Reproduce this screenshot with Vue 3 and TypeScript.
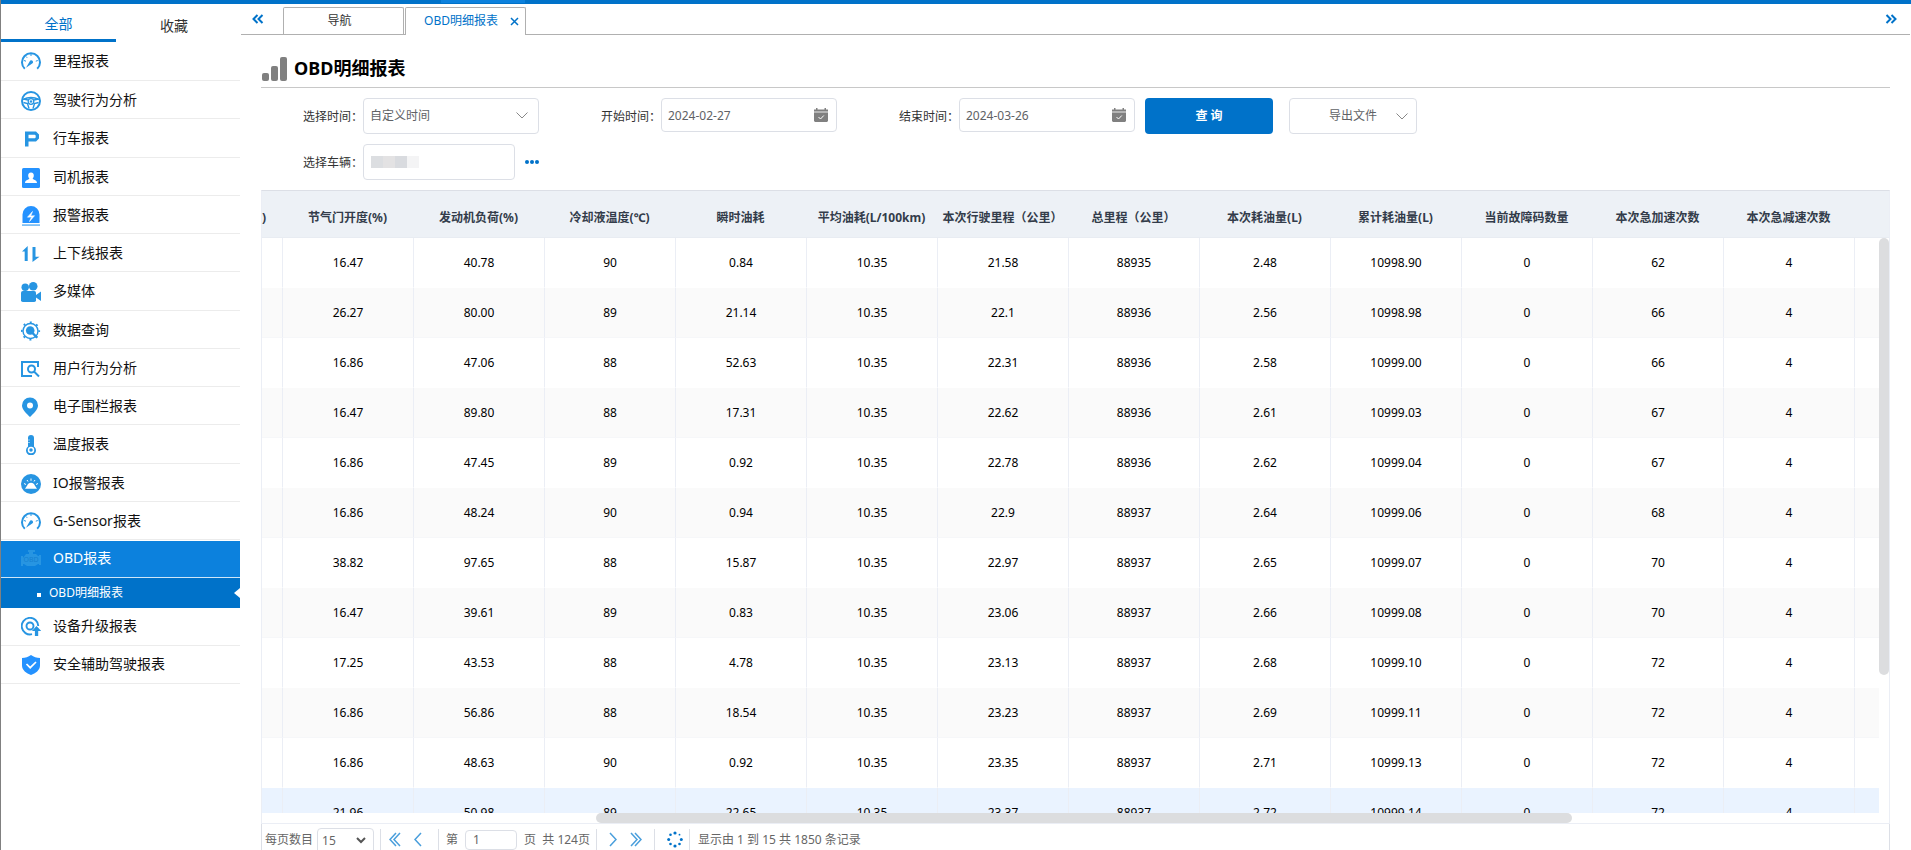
<script setup lang="ts">
import { ref } from 'vue'

interface MenuItem {
  label: string
  icon: string
}

const gauge =
  '<g fill="none" stroke="currentColor" stroke-width="2"><path d="M3.800 16.800A9 9 0 1 1 16.200 16.800"/><path d="M10 2v2M3 8.500l2 .7M16.800 8.500l-2 .7M5 4.500l1.200 1.300" stroke-width="1"/></g><path d="M5 15.800L8.600 9.400a1.800 1.800 0 1 1 2.600 2.200z"/>'

const icons: Record<string, string> = {
  gauge,
  wheel:
    '<g fill="none" stroke="currentColor"><circle cx="10" cy="10" r="9" stroke-width="2"/><circle cx="10" cy="10.500" r="2.800" stroke-width="1.300"/><path d="M2 8.500q8-4 16 0M2.500 11.500l4 1 1.500 5M17.500 11.500l-4 1-1.500 5M7 9l-4.500-1M13 9l4.500-1" stroke-width="1.400"/></g><circle cx="10" cy="10.500" r="1.200"/>',
  parking: '<path d="M4 2.500h11l3 3v4l-3 3H7.500v5H4zM7.500 5.700v3.600h6.300l.9-.9V6.600l-.9-.9z" fill-rule="evenodd"/>',
  driver:
    '<rect x="1" y="0" width="18" height="20" rx="1.500" fill="#2492ff"/><path d="M10 4.500c2 0 3 1.400 2.800 3.400-.1 1.300-.7 2-1.200 2.700.3 1.300 4.400 1.300 4.400 4.400H4c0-3.100 4.100-3.100 4.400-4.400-.5-.7-1.100-1.400-1.200-2.700C7 5.900 8 4.500 10 4.500z" fill="#fff"/>',
  alarm:
    '<path d="M1.500 17V8.500a8.500 8.500 0 0 1 17 0V17z" fill="#2492ff"/><path d="M1 18.200h18V20H1z" fill="#7fc0f5"/><path d="M11.500 5.500l-5 5.700 4-.3-2 4.600 5-5.800-3.800.3z" fill="#fff" stroke="#fff" stroke-width=".6"/>',
  updown: '<path d="M1 7.500L6.700 2v15H3.700V7.500zM11.500 3h3v9.700h4L11.500 18z"/>',
  camera:
    '<circle cx="4.200" cy="5.200" r="3.700"/><circle cx="12.200" cy="4.300" r="4.300"/><rect x="0" y="9" width="15" height="11" rx="1.800"/><path d="M15 13l5-3.500v9.500l-5-3.500z"/>',
  query:
    '<g fill="none" stroke="currentColor"><circle cx="9.500" cy="10" r="7.500" stroke-width="1.400"/><circle cx="9.500" cy="10" r="8.700" stroke-width="1.800" stroke-dasharray="2 4.830" stroke-dashoffset="1"/><path d="M11.500 12l4.500 4.500" stroke-width="2.400"/></g><circle cx="9.200" cy="9.500" r="4.300"/>',
  behavior:
    '<g fill="none" stroke="currentColor" stroke-width="2"><path d="M11 17H1V3h16v5"/><circle cx="10.500" cy="10" r="3.500"/><path d="M13 12.500l5 5"/></g>',
  pin: '<path d="M9 .5a8 8 0 0 1 8 8c0 4.300-4.500 8-8 11.500C5.500 16.500 1 12.800 1 8.500a8 8 0 0 1 8-8zm0 5a3 3 0 1 0 0 6 3 3 0 0 0 0-6z" fill-rule="evenodd"/>',
  thermo:
    '<path d="M7 3a3 3 0 0 1 6 0v8.400a5 5 0 1 1-6 0z"/><path d="M7 5h2M7 7.500h2" stroke="#8fcaf2"/><circle cx="10" cy="15" r="2.500" fill="none" stroke="#fff" stroke-width="1.500"/>',
  io: '<circle cx="10" cy="10" r="10"/><path d="M4 14.800l2.200-3.300C7 9.700 8 8.700 10 8.700s3 1 3.800 2.800l2.200 3.300z" fill="#fff"/><path d="M10 4.500v2.300M6 6l1 1.500M14 6L13 7.500M3 9.500l2 1M17 9.500L15 10.500" stroke="#fff"/>',
  obd: '<path d="M7 2h7v2h-2v2h3l2 2h1V7h2v10h-2v-1h-1l-3 2H6l-3-2H2v2H0V8h2v2l3-4h3V4H7z"/><text x="10" y="14" text-anchor="middle" font-size="7" font-family="Noto Sans" fill="#1580d0">OBD</text>',
  upgrade:
    '<g fill="none" stroke="currentColor" stroke-width="1.900"><path d="M11 17.200A8.300 8.300 0 1 1 17.300 9"/><circle cx="9" cy="9" r="3.500"/></g><path d="M15.500 9l4.800 5h-3.100v5h-3.300v-5h-3z"/>',
  shield:
    '<path d="M10 0c2.800 2 5.500 2.700 9 3v7.500c0 4.500-4.500 8-9 9.500-4.500-1.500-9-5-9-9.500V3c3.500-.3 6.200-1 9-3z" fill="#2492ff"/><path d="M5.500 9l3.700 3.700L15 7" fill="none" stroke="#fff" stroke-width="1.700"/>',
}

const menu: MenuItem[] = [
  { label: '里程报表', icon: 'gauge' },
  { label: '驾驶行为分析', icon: 'wheel' },
  { label: '行车报表', icon: 'parking' },
  { label: '司机报表', icon: 'driver' },
  { label: '报警报表', icon: 'alarm' },
  { label: '上下线报表', icon: 'updown' },
  { label: '多媒体', icon: 'camera' },
  { label: '数据查询', icon: 'query' },
  { label: '用户行为分析', icon: 'behavior' },
  { label: '电子围栏报表', icon: 'pin' },
  { label: '温度报表', icon: 'thermo' },
  { label: 'IO报警报表', icon: 'io' },
  { label: 'G-Sensor报表', icon: 'gauge' },
]

const menuAfter: MenuItem[] = [
  { label: '设备升级报表', icon: 'upgrade' },
  { label: '安全辅助驾驶报表', icon: 'shield' },
]

const columns = [
  '节气门开度(%)', '发动机负荷(%)', '冷却液温度(℃)', '瞬时油耗', '平均油耗(L/100km)', '本次行驶里程（公里）',
  '总里程（公里）', '本次耗油量(L)', '累计耗油量(L)', '当前故障码数量', '本次急加速次数', '本次急减速次数',
]

const rows: string[][] = [
  ['16.47', '40.78', '90', '0.84', '10.35', '21.58', '88935', '2.48', '10998.90', '0', '62', '4'],
  ['26.27', '80.00', '89', '21.14', '10.35', '22.1', '88936', '2.56', '10998.98', '0', '66', '4'],
  ['16.86', '47.06', '88', '52.63', '10.35', '22.31', '88936', '2.58', '10999.00', '0', '66', '4'],
  ['16.47', '89.80', '88', '17.31', '10.35', '22.62', '88936', '2.61', '10999.03', '0', '67', '4'],
  ['16.86', '47.45', '89', '0.92', '10.35', '22.78', '88936', '2.62', '10999.04', '0', '67', '4'],
  ['16.86', '48.24', '90', '0.94', '10.35', '22.9', '88937', '2.64', '10999.06', '0', '68', '4'],
  ['38.82', '97.65', '88', '15.87', '10.35', '22.97', '88937', '2.65', '10999.07', '0', '70', '4'],
  ['16.47', '39.61', '89', '0.83', '10.35', '23.06', '88937', '2.66', '10999.08', '0', '70', '4'],
  ['17.25', '43.53', '88', '4.78', '10.35', '23.13', '88937', '2.68', '10999.10', '0', '72', '4'],
  ['16.86', '56.86', '88', '18.54', '10.35', '23.23', '88937', '2.69', '10999.11', '0', '72', '4'],
  ['16.86', '48.63', '90', '0.92', '10.35', '23.35', '88937', '2.71', '10999.13', '0', '72', '4'],
  ['21.96', '50.98', '89', '22.65', '10.35', '23.37', '88937', '2.72', '10999.14', '0', '72', '4'],
]

const hovered = 11
const startDate = ref('2024-02-27')
const endDate = ref('2024-03-26')
const vehicle = ref('')
const page = ref('1')
</script>

<template>
  <div class="app">
    <div class="topbar"><span class="topbar-mark"></span></div>
    <div class="body">
      <aside class="sidebar">
        <div class="side-tabs">
          <button class="side-tab active" type="button">全部</button>
          <button class="side-tab" type="button">收藏</button>
        </div>
        <nav>
          <ul class="menu">
            <li v-for="item in menu" :key="item.label">
              <a href="#" class="menu-link">
                <svg class="menu-icon" viewBox="0 0 20 20" aria-hidden="true" v-html="icons[item.icon]"></svg>
                {{ item.label }}
              </a>
            </li>
          </ul>
          <div class="open-group">
            <a href="#" class="menu-link selected">
              <svg class="menu-icon" viewBox="0 0 20 20" aria-hidden="true" v-html="icons.obd"></svg>
              OBD报表
            </a>
            <a href="#" class="sub-link">OBD明细报表</a>
          </div>
          <ul class="menu after">
            <li v-for="item in menuAfter" :key="item.label">
              <a href="#" class="menu-link">
                <svg class="menu-icon" viewBox="0 0 20 20" aria-hidden="true" v-html="icons[item.icon]"></svg>
                {{ item.label }}
              </a>
            </li>
          </ul>
        </nav>
      </aside>

      <main class="main">
        <div class="tabs">
          <button class="tab-scroll" type="button" aria-label="向左">
            <svg width="12" height="10" viewBox="0 0 12 10"><path d="M5.500 1L1.500 5l4 4M10.500 1l-4 4 4 4" /></svg>
          </button>
          <button class="tab" type="button">导航</button>
          <button class="tab current" type="button">
            OBD明细报表
            <svg width="9" height="9" viewBox="0 0 9 9"><path d="M1 1l7 7M8 1L1 8" /></svg>
          </button>
          <button class="tab-scroll right" type="button" aria-label="向右">
            <svg width="12" height="10" viewBox="0 0 12 10"><path d="M1.500 1l4 4-4 4M6.500 1l4 4-4 4" /></svg>
          </button>
        </div>

        <div class="content">
          <header class="title">
            <svg width="25" height="24" viewBox="0 0 25 24" aria-hidden="true">
              <rect x="0" y="16" width="7" height="8" rx="2" />
              <rect x="9" y="9" width="7" height="15" rx="2" />
              <rect x="18" y="0" width="7" height="24" rx="2" />
            </svg>
            <h1>OBD明细报表</h1>
          </header>

          <form class="filters" @submit.prevent>
            <div class="line">
              <div class="field">
                <label for="range">选择时间：</label>
                <div class="control">
                  <select id="range" class="box tall"><option>自定义时间</option></select>
                  <svg class="chevron" width="12" height="7" viewBox="0 0 12 7"><path d="M.5 .5L6 6l5.500-5.500" /></svg>
                </div>
              </div>
              <div class="field">
                <label for="start">开始时间：</label>
                <div class="control">
                  <input id="start" v-model="startDate" class="box" type="text" />
                  <svg class="cal" width="14" height="14" viewBox="0 0 14 14">
                    <path d="M0 1.500h2V0h1.500v1.500h7V0H12v1.500h2V3H0z" fill="#808080" />
                    <path d="M0 3h14v2H0z" fill="#b5b5b5" />
                    <path d="M0 5h14v8l-1 1H1l-1-1z" fill="#808080" />
                    <path d="M4.500 9l2 2 3.300-3.500" fill="none" stroke="#fff" />
                  </svg>
                </div>
              </div>
              <div class="field">
                <label for="end">结束时间：</label>
                <div class="control">
                  <input id="end" v-model="endDate" class="box" type="text" />
                  <svg class="cal" width="14" height="14" viewBox="0 0 14 14">
                    <path d="M0 1.500h2V0h1.500v1.500h7V0H12v1.500h2V3H0z" fill="#808080" />
                    <path d="M0 3h14v2H0z" fill="#b5b5b5" />
                    <path d="M0 5h14v8l-1 1H1l-1-1z" fill="#808080" />
                    <path d="M4.500 9l2 2 3.300-3.500" fill="none" stroke="#fff" />
                  </svg>
                </div>
              </div>
              <div class="actions">
                <button class="btn primary" type="submit">查 询</button>
                <button class="btn export" type="button">
                  导出文件
                  <svg class="chevron" width="12" height="7" viewBox="0 0 12 7"><path d="M.5 .5L6 6l5.500-5.500" /></svg>
                </button>
              </div>
            </div>
            <div class="line">
              <div class="field">
                <label for="vehicle">选择车辆：</label>
                <div class="control narrow">
                  <input id="vehicle" v-model="vehicle" class="box tall" type="text" />
                  <span class="mask"><i></i><i></i><i></i><i></i></span>
                </div>
                <button class="more" type="button" aria-label="更多">
                  <svg width="14" height="4" viewBox="0 0 14 4"><circle cx="2" cy="2" r="2" /><circle cx="7" cy="2" r="2" /><circle cx="12" cy="2" r="2" /></svg>
                </button>
              </div>
            </div>
          </form>

          <section class="grid">
            <div class="viewport">
              <table>
                <colgroup>
                  <col class="c-edge" />
                  <col v-for="c in columns" :key="c" class="c-data" />
                  <col />
                </colgroup>
                <thead>
                  <tr>
                    <th class="edge">)</th>
                    <th v-for="c in columns" :key="c">{{ c }}</th>
                    <th></th>
                  </tr>
                </thead>
                <tbody>
                  <tr v-for="(row, r) in rows" :key="r" :class="{ hovered: r === hovered }">
                    <td></td>
                    <td v-for="(cell, c) in row" :key="c">{{ cell }}</td>
                    <td class="last"></td>
                  </tr>
                </tbody>
              </table>
              <div class="vbar"><span></span></div>
            </div>
            <div class="hbar"><span></span></div>
          </section>

          <footer class="pager">
            <label for="size">每页数目</label>
            <div class="size">
              <select id="size"><option>15</option></select>
              <svg width="10" height="7" viewBox="0 0 10 7"><path d="M1 1l4 4 4-4" /></svg>
            </div>
            <span class="sep"></span>
            <div class="nav back">
              <button type="button" aria-label="首页">
                <svg width="12" height="15" viewBox="0 0 12 15"><path d="M7 1L1 7.500 7 14M11 1L5 7.500 11 14" /></svg>
              </button>
              <button type="button" aria-label="上一页">
                <svg width="8" height="15" viewBox="0 0 8 15"><path d="M7 1L1 7.500 7 14" /></svg>
              </button>
            </div>
            <span class="sep"></span>
            <label for="page" class="page-label">第</label>
            <input id="page" v-model="page" type="text" />
            <span class="total">页&nbsp; 共 124页</span>
            <span class="sep"></span>
            <div class="nav">
              <button type="button" aria-label="下一页">
                <svg width="8" height="15" viewBox="0 0 8 15"><path d="M1 1l6 6.500L1 14" /></svg>
              </button>
              <button type="button" aria-label="末页">
                <svg width="12" height="15" viewBox="0 0 12 15"><path d="M1 1l6 6.500L1 14M5 1l6 6.500L5 14" /></svg>
              </button>
            </div>
            <span class="sep"></span>
            <button class="reload" type="button" aria-label="刷新">
              <svg width="16" height="17" viewBox="0 0 16 17">
                <circle cx="8" cy="2" r="1.600" /><circle cx="12.500" cy="3.700" r=".9" /><circle cx="14.300" cy="8.500" r="1.500" />
                <circle cx="12.500" cy="13" r="1.300" /><circle cx="8" cy="15" r="1.600" /><circle cx="3.500" cy="13" r="1.300" />
                <circle cx="1.700" cy="8.500" r="1.500" /><circle cx="3.500" cy="3.700" r="1.300" />
              </svg>
            </button>
            <span class="sep"></span>
            <span class="summary">显示由 1 到 15 共 1850 条记录</span>
          </footer>
        </div>
      </main>
    </div>
  </div>
</template>

<style>
body {
  background: #fff;
  overflow: hidden;
}
</style>

<style scoped>
.app,
.app * {
  box-sizing: border-box;
}
.app {
  display: flex;
  flex-direction: column;
  height: 100vh;
  overflow: hidden;
  border-left: 1px solid #808080;
  font-family: 'Noto Sans', 'Noto Sans CJK SC', sans-serif;
  font-size: 12px;
  line-height: 18px;
  color: #333;
}
button,
input,
select {
  margin: 0;
  padding: 0;
  border: 0;
  background: none;
  font: inherit;
  color: inherit;
  appearance: none;
  border-radius: 0;
  outline: none;
}
a {
  color: inherit;
  text-decoration: none;
}
ul {
  margin: 0;
  padding: 0;
  list-style: none;
}
svg {
  display: block;
  flex: none;
}
.topbar {
  flex: none;
  height: 4px;
  padding-left: 440px;
  background: #0072c9;
}
.topbar-mark {
  display: block;
  width: 84px;
  height: 3px;
  background: #0c81dd;
}
.body {
  flex: 1;
  display: flex;
  gap: 1px;
  min-height: 0;
}

/* sidebar */
.sidebar {
  flex: none;
  width: 239px;
}
.side-tabs {
  display: flex;
  height: 38px;
}
.side-tab {
  flex: 1;
  padding: 6px 8px 0 0;
  font-size: 14px;
  line-height: 20px;
}
.side-tab.active {
  flex: none;
  width: 115px;
  padding: 4px 0 0;
  border-bottom: 3px solid #0072c9;
  color: #0072c9;
}
.menu li {
  height: 38px;
  border-bottom: 1px solid #ececec;
}
.menu li:first-child,
.menu li:nth-child(4n + 3) {
  height: 39px;
}
.menu.after li {
  height: 38px;
}
.menu-link {
  display: flex;
  align-items: center;
  gap: 12px;
  height: 100%;
  padding: 0 0 0 20px;
  font-size: 14px;
  line-height: 20px;
  color: #111;
}
.menu-icon {
  width: 20px;
  height: 20px;
  margin-top: 2px;
  fill: currentColor;
  color: #2795e2;
}
.menu.after .menu-link {
  padding-bottom: 2px;
}
.open-group {
  padding-top: 1px;
}
.menu-link.selected {
  height: 37px;
  border-bottom: 1px solid #cfe6f8;
  padding-bottom: 2px;
  background: #0c81dd;
  color: #fff;
}
.menu-link.selected .menu-icon {
  margin-top: 0;
}
.sub-link {
  position: relative;
  display: flex;
  align-items: center;
  gap: 8px;
  height: 30px;
  padding-left: 36px;
  background: #0072c9;
  color: #fff;
}
.sub-link::before {
  content: '';
  width: 4px;
  height: 4px;
  margin-top: 3px;
  background: #fff;
}
.sub-link::after {
  content: '';
  position: absolute;
  right: 0;
  top: 10px;
  border: 5px solid transparent;
  border-left: 0;
  border-right: 6px solid #fff;
}

/* tab strip */
.main {
  flex: 1;
  min-width: 0;
  display: flex;
  flex-direction: column;
}
.tabs {
  flex: none;
  display: flex;
  align-items: flex-end;
  gap: 1px;
  height: 31px;
  margin-right: 1px;
  border-bottom: 1px solid #b0b0b0;
}
.tab-scroll {
  align-self: center;
  width: 41px;
  padding-left: 11px;
}
.tab-scroll.right {
  width: 25px;
  padding: 0;
  margin-left: auto;
}
.tab-scroll svg {
  fill: none;
  stroke: #0072c9;
  stroke-width: 2;
}
.tab {
  display: flex;
  align-items: center;
  justify-content: center;
  width: 121px;
  height: 27px;
  padding: 0 8px 0 0;
  border: 1px solid #b0b0b0;
  border-bottom: 0;
  border-radius: 2px 2px 0 0;
}
.tab.current {
  gap: 12px;
  height: 28px;
  margin-bottom: -1px;
  padding: 0 0 1px 12px;
  background: #fff;
  color: #0072c9;
}
.tab.current svg {
  fill: none;
  stroke: #0072c9;
  stroke-width: 1.5px;
}

/* content */
.content {
  flex: 1;
  min-height: 0;
  display: flex;
  flex-direction: column;
  margin: 0 21px 0 20px;
}
.title {
  flex: none;
  display: flex;
  align-items: flex-end;
  gap: 7px;
  height: 53px;
  padding: 0 0 6px 1px;
  border-bottom: 1px solid #c8c8c8;
}
.title svg {
  fill: #808080;
}
.title h1 {
  margin: 0;
  padding-bottom: 1px;
  font-size: 18px;
  font-weight: 700;
  line-height: 24px;
  color: #000;
}
.filters {
  flex: none;
  display: flex;
  flex-direction: column;
  gap: 10px;
  padding: 10px 0 10px 42px;
}
.line {
  display: flex;
  gap: 62px;
  height: 36px;
}
.field {
  display: flex;
}
.field label {
  width: 60px;
  padding-top: 10px;
  white-space: nowrap;
}
.control {
  position: relative;
  width: 176px;
}
.control.narrow {
  width: 152px;
}
.box {
  display: block;
  width: 100%;
  height: 34px;
  padding: 0 6px;
  border: 1px solid #dcdfe6;
  border-radius: 4px;
  color: #606266;
}
.box.tall {
  height: 36px;
}
.chevron {
  fill: none;
  stroke: #888;
}
.control .chevron {
  position: absolute;
  right: 11px;
  top: 14px;
}
.cal {
  position: absolute;
  right: 9px;
  top: 10px;
}
.mask {
  position: absolute;
  left: 8px;
  top: 12px;
  display: flex;
}
.mask i {
  width: 12px;
  height: 12px;
  background: #dcdee1;
}
.mask i:nth-child(2) {
  background: #e3e2e3;
}
.mask i:nth-child(3) {
  background: #d9dbdf;
}
.mask i:last-child {
  background: #f4f4f5;
}
.more {
  padding-left: 10px;
  fill: #0072c9;
}
.actions {
  display: flex;
  gap: 16px;
  margin-left: -52px;
}
.btn {
  width: 128px;
  height: 36px;
  border-radius: 4px;
}
.btn.primary {
  background: #0072c9;
  color: #fff;
  font-weight: 700;
}
.btn.export {
  display: flex;
  align-items: center;
  justify-content: flex-end;
  gap: 19px;
  padding-right: 8px;
  border: 1px solid #dcdfe6;
  color: #606266;
}

/* data grid */
.grid {
  flex: 1;
  min-height: 0;
  display: flex;
  flex-direction: column;
  border: 1px solid #ebeef5;
  border-top-color: #dcdfe6;
}
.viewport {
  position: relative;
  flex: 1;
  min-height: 0;
  overflow: hidden;
}
table {
  width: 100%;
  table-layout: fixed;
  border-collapse: separate;
  border-spacing: 0;
}
.c-edge {
  width: 21px;
}
.c-data {
  width: 131px;
}
th {
  height: 47px;
  padding: 7px 2px 0 0;
  border-bottom: 1px solid #e8ecf2;
  background: #edf1f6;
  font-weight: 700;
  color: #333c4a;
  white-space: nowrap;
}
th.edge {
  text-align: left;
}
td {
  height: 50px;
  padding: 1px 0 0;
  border-right: 1px solid #ebeef5;
  background-clip: padding-box;
  border-bottom: 1px solid #fff;
  text-align: center;
  color: #000;
}
tbody tr:nth-child(even) td {
  background-color: #fafafa;
  border-bottom-color: #f6f7f9;
}
tbody tr.hovered td {
  background-color: #eaf3ff;
}
td.last {
  border-right: 0;
}
.vbar {
  position: absolute;
  top: 47px;
  right: 0;
  bottom: 0;
  width: 10px;
  background: #fff;
}
.vbar span {
  display: block;
  width: 10px;
  height: 76%;
  border-radius: 5px;
  background: #dcdddf;
}
.hbar {
  flex: none;
  height: 10px;
  padding: 0 317px 0 334px;
}
.hbar span {
  display: block;
  height: 10px;
  border-radius: 5px;
  background: #dcdddf;
}

/* pager */
.pager {
  flex: none;
  display: flex;
  align-items: center;
  height: 26px;
  padding: 5px 0 0 3px;
  border: solid #dcdfe6;
  border-width: 0 1px;
  color: #666;
}
.pager > * {
  flex: none;
}
.size {
  position: relative;
  width: 57px;
  height: 24px;
  margin-left: 4px;
}
.size select {
  width: 57px;
  height: 26px;
  padding: 0 4px;
  border: 1px solid #dcdfe6;
  border-radius: 4px;
}
.size svg {
  position: absolute;
  right: 8px;
  top: 9px;
  fill: none;
  stroke: #555;
  stroke-width: 2;
}
.sep {
  width: 1px;
  height: 22px;
  margin-left: 6px;
  background: #dcdfe6;
}
.nav {
  display: flex;
  gap: 13px;
  padding: 0 12px;
  fill: none;
  stroke: #4a9fdc;
  stroke-width: 1.5px;
}
.nav.back {
  padding: 0 16px 0 8px;
}
.page-label {
  padding: 0 7px;
}
.pager > input {
  width: 52px;
  height: 20px;
  padding: 0 7px;
  border: 1px solid #dcdfe6;
  border-radius: 4px;
}
.total {
  padding-left: 7px;
}
.nav + .sep {
  margin-left: 0;
}
.reload {
  padding-left: 12px;
  fill: #0072c9;
}
.summary {
  padding-left: 8px;
}
</style>
